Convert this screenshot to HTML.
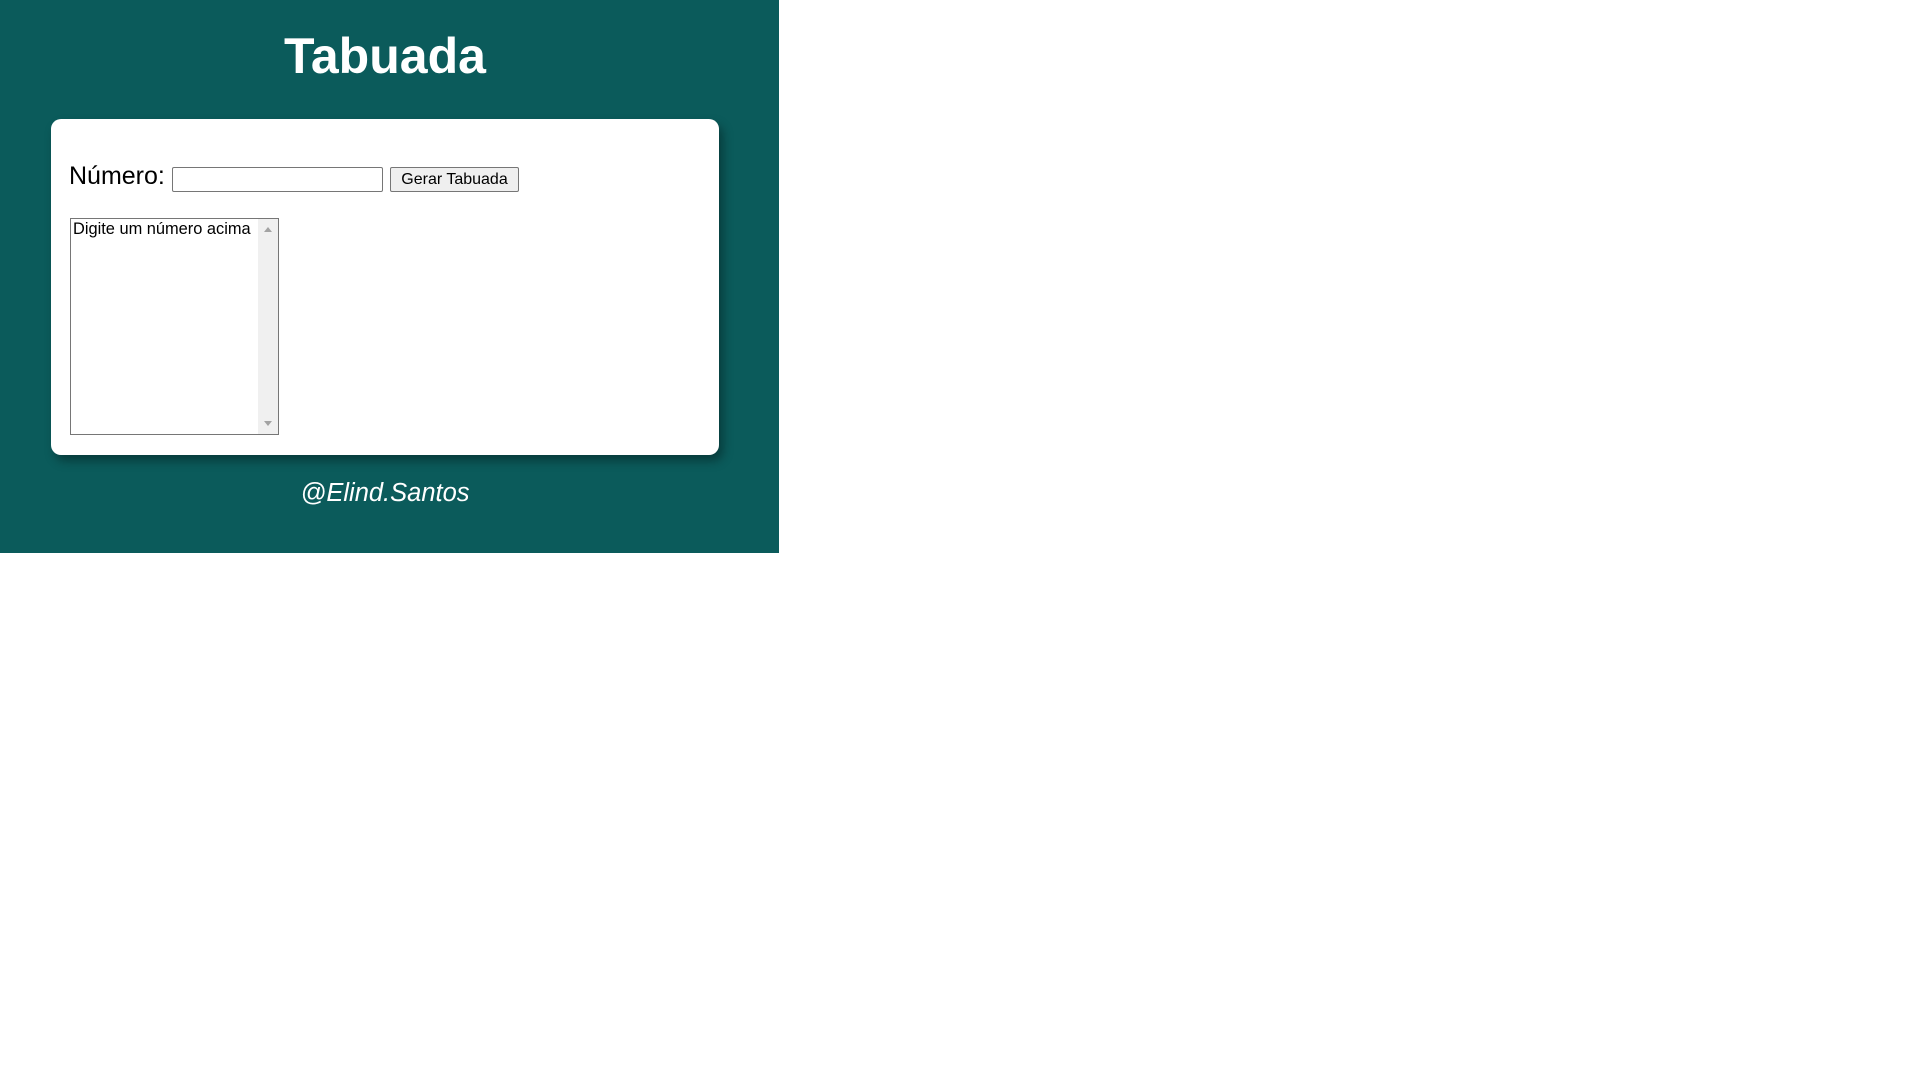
<!DOCTYPE html>
<html><head><meta charset="utf-8"><style>
html,body{margin:0;padding:0;background:#fff;width:1920px;height:1080px;overflow:hidden;font-family:"Liberation Sans",Arial,sans-serif;}
.bg{position:absolute;left:0;top:0;width:779px;height:553px;background:#0b5b5b;}
h1{position:absolute;left:0;width:770px;top:26px;margin:0;text-align:center;color:#fff;font-size:50px;font-weight:bold;line-height:60px;}
.card{position:absolute;left:51px;top:119px;width:668px;height:336px;background:#fff;border-radius:10px;box-shadow:4px 6px 10px rgba(0,0,0,0.35);}
.lbl{position:absolute;left:69px;top:162px;font-size:25px;line-height:28px;color:#000;}
.inp{position:absolute;left:172px;top:167px;width:211px;height:25px;box-sizing:border-box;border:1px solid #767676;border-radius:2px;background:#fff;}
.btn{position:absolute;left:390px;top:167px;width:129px;height:25px;box-sizing:border-box;border:1px solid #767676;border-radius:2px;background:#efefef;font-size:16px;line-height:23px;text-align:center;color:#000;}
.sel{position:absolute;left:70px;top:218px;width:209px;height:217px;box-sizing:border-box;border:1px solid #767676;background:#fff;}
.sel .t{position:absolute;left:2px;top:1px;font-size:16.4px;line-height:19px;color:#000;white-space:nowrap;}
.sb{position:absolute;right:0;top:0;width:20px;height:100%;background:#f0f0f0;}
.up{position:absolute;left:6px;top:8px;width:0;height:0;border-left:4px solid transparent;border-right:4px solid transparent;border-bottom:5px solid #a3a3a3;}
.dn{position:absolute;left:6px;bottom:8px;width:0;height:0;border-left:4px solid transparent;border-right:4px solid transparent;border-top:5px solid #a3a3a3;}
.ft{position:absolute;left:0;width:770px;top:479px;text-align:center;color:#fff;font-style:italic;font-size:25.5px;line-height:28px;}
</style></head><body>
<div class="bg"></div>
<h1>Tabuada</h1>
<div class="card"></div>
<div class="lbl">Número:</div>
<div class="inp"></div>
<div class="btn">Gerar Tabuada</div>
<div class="sel"><div class="t">Digite um número acima</div><div class="sb"><div class="up"></div><div class="dn"></div></div></div>
<div class="ft">@Elind.Santos</div>
</body></html>
